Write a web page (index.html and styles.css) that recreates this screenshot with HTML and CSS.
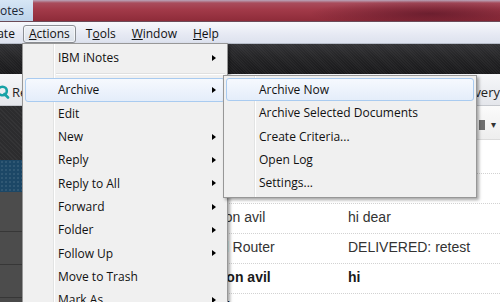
FILE: index.html
```html
<!DOCTYPE html>
<html lang="en">
<head>
    <meta charset="UTF-8">
    <title>IBM Notes - Actions</title>
    <link rel="stylesheet" href="styles.css">
</head>
<body>
    <div class="window">
        <div class="titlebar">
            <div class="title-text">Notes</div>
            <div class="title-glass"></div>
        </div>

        <div class="menubar">
            <span class="mb-item mb-cut">Create</span>
            <span class="mb-item open"><u>A</u>ctions</span>
            <span class="mb-item">T<u>o</u>ols</span>
            <span class="mb-item"><u>W</u>indow</span>
            <span class="mb-item"><u>H</u>elp</span>
        </div>

        <div class="toolbar-dark"></div>

        <div class="toolbar-light">
            <span class="tb-left">
                <svg class="q-icon" width="11" height="14" viewBox="0 0 11 14">
                    <circle cx="3.5" cy="6" r="4.3" fill="none" stroke="#16a2a6" stroke-width="2.6"/>
                    <path d="M5.5 9 L9 12.5" stroke="#16a2a6" stroke-width="2.6" stroke-linecap="round"/>
                </svg>
                Re
            </span>
            <span class="tb-right">very</span>
        </div>

        <div class="workspace">
            <div class="navpane">
                <div class="nav-dark"></div>
                <div class="nav-sel"></div>
                <div class="nav-row tall"></div>
                <div class="nav-row"></div>
                <div class="nav-row"></div>
            </div>
            <div class="viewpane">
                <div class="view-head">
                    <span class="view-box"></span>
                    <span class="view-drop">&#9662;</span>
                </div>
                <div class="rows">
                    <div class="row"></div>
                    <div class="row"></div>
                    <div class="row"><span class="who">Jason avil</span><span class="subj">hi dear</span></div>
                    <div class="row"><span class="who">Mail Router</span><span class="subj">DELIVERED: retest</span></div>
                    <div class="row unread"><span class="who">Jason avil</span><span class="subj">hi</span></div>
                    <div class="row unread"><span class="who">Mail Router</span><span class="subj">DELIVERED</span></div>
                </div>
            </div>
        </div>

        <div class="menu menu-main">
            <div class="mi">IBM iNotes<span class="arrow"></span></div>
            <div class="sep"></div>
            <div class="mi hot">Archive<span class="arrow"></span></div>
            <div class="mi">Edit</div>
            <div class="mi">New<span class="arrow"></span></div>
            <div class="mi">Reply<span class="arrow"></span></div>
            <div class="mi">Reply to All<span class="arrow"></span></div>
            <div class="mi">Forward<span class="arrow"></span></div>
            <div class="mi">Folder<span class="arrow"></span></div>
            <div class="mi">Follow Up<span class="arrow"></span></div>
            <div class="mi">Move to Trash</div>
            <div class="mi">Mark As<span class="arrow"></span></div>
        </div>

        <div class="menu menu-sub">
            <div class="mi hot">Archive Now</div>
            <div class="mi">Archive Selected Documents</div>
            <div class="mi">Create Criteria...</div>
            <div class="mi">Open Log</div>
            <div class="mi">Settings...</div>
        </div>
    </div>
</body>
</html>
```

FILE: styles.css
```css
body {
    margin: 0;
    font-family: 'Open Sans', 'Noto Sans', sans-serif;
    background-color: #fff;
}
.window {
    position: relative;
    width: 500px;
    height: 302px;
    overflow: hidden;
    background-color: #fff;
}

/* title bar */
.titlebar {
    display: flex;
    height: 21px;
    border-bottom: 1px solid #6b4a58;
}
.title-text {
    width: 33px;
    overflow: hidden;
    white-space: nowrap;
    text-indent: -9px;
    font-size: 12px;
    line-height: 21px;
    color: #1b2533;
    background: linear-gradient(#d6e6f5, #bcd3ea);
}
.title-glass {
    flex: 1;
    background:
        radial-gradient(ellipse 120px 14px at 85% 65%, rgba(70, 12, 30, 0.55), transparent),
        linear-gradient(#b9a6ba 0, #a94c5c 3px, #a23a49 45%, #8e2b39 100%);
}

/* menu bar */
.menubar {
    display: flex;
    align-items: flex-start;
    height: 18px;
    padding-top: 3px;
    border-bottom: 1px solid #b7bdc9;
    background: linear-gradient(#f7f8fc, #e6e9f3 60%, #dde2ee);
    font-size: 12px;
    color: #111;
    overflow: hidden;
}
.mb-item {
    padding: 0 8px;
    line-height: 18px;
    white-space: nowrap;
}
.mb-cut {
    margin-left: -22px;
    padding-left: 0;
}
.mb-item.open {
    padding: 0 5px;
    line-height: 16px;
    margin-right: 2px;
    border: 1px solid #8c8f95;
    border-radius: 3px;
    background: linear-gradient(#eef1f6, #dbe1ea);
    box-shadow: inset 0 0 0 1px rgba(255, 255, 255, 0.6);
}

/* toolbars */
.toolbar-dark {
    height: 30px;
    background:
        repeating-linear-gradient(45deg, rgba(255, 255, 255, 0.035) 0 1px, transparent 1px 2px),
        linear-gradient(#333336, #242426 45%, #19191b);
}
.toolbar-light {
    display: flex;
    justify-content: space-between;
    align-items: center;
    height: 27px;
    padding-top: 4px;
    border-bottom: 1px solid #c4c7cd;
    background: linear-gradient(#f6f7f9, #e4e6eb);
    font-size: 13px;
    color: #222;
}
.tb-left {
    display: flex;
    align-items: center;
    gap: 2px;
}
.q-icon {
    margin-left: -1px;
}
.tb-right {
    white-space: nowrap;
}

/* workspace behind the menus */
.workspace {
    display: grid;
    grid-template-columns: 190px 1fr;
}
.navpane {
    display: flex;
    flex-direction: column;
    background-color: #4a4a4a;
    height: 200px;
}
.nav-dark {
    height: 54px;
    background:
        repeating-linear-gradient(45deg, rgba(255, 255, 255, 0.04) 0 1px, transparent 1px 3px),
        #2c2c2e;
}
.nav-sel {
    height: 32px;
    background:
        radial-gradient(circle, rgba(255, 255, 255, 0.12) 0.6px, transparent 1px) 0 0 / 4px 4px,
        #1c4766;
}
.nav-row {
    height: 32px;
    border-bottom: 1px solid #373737;
    background-color: #4c4c4c;
}
.nav-row.tall {
    height: 39px;
}
.viewpane {
    font-family: 'Liberation Sans', Arial, sans-serif;
    font-size: 14px;
    color: #333;
}
.view-head {
    display: flex;
    justify-content: flex-end;
    align-items: center;
    gap: 6px;
    box-sizing: border-box;
    height: 34px;
    padding: 4px 4px 0 0;
    border-bottom: 1px solid #dcdcdc;
    background: linear-gradient(#fbfbfb, #eeeeee);
}
.view-box {
    width: 6px;
    height: 10px;
    background-color: #6e6e6e;
}
.view-drop {
    font-size: 10px;
    color: #333;
}
.rows {
    padding-top: 4px;
}
.row {
    display: grid;
    grid-template-columns: 158px 1fr;
    align-items: center;
    height: 26px;
    padding-bottom: 3px;
    border-bottom: 1px dotted #d2d2d2;
}
.row .who {
    padding-left: 13px;
    white-space: nowrap;
}
.row.unread {
    font-weight: bold;
    color: #1a1a1a;
}

/* drop-down menus */
.menu {
    position: absolute;
    box-sizing: border-box;
    padding: 2px;
    border: 1px solid #979797;
    background-color: #f0f0f0;
    background-image: linear-gradient(90deg, transparent 30px, #e2e3e3 30px 31px, #fff 31px 32px, transparent 32px);
    box-shadow: 2px 2px 3px rgba(0, 0, 0, 0.35);
    font-size: 12px;
    color: #111;
}
.menu-main {
    left: 22px;
    top: 43px;
    width: 206px;
    height: 280px;
}
.menu-sub {
    left: 223px;
    top: 75px;
    width: 254px;
}
.mi {
    display: flex;
    align-items: center;
    justify-content: space-between;
    box-sizing: border-box;
    height: 23.33px;
    padding: 0 8px 0 32px;
    border: 1px solid transparent;
    border-radius: 3px;
    white-space: nowrap;
}
.mi.hot {
    border-color: #a9cbf0;
    background: linear-gradient(#f6f9fe, #e4edfa);
}
.arrow {
    width: 0;
    height: 0;
    border-left: 4px solid #000;
    border-top: 3.5px solid transparent;
    border-bottom: 3.5px solid transparent;
}
.sep {
    height: 9px;
    background:
        linear-gradient(#e0e0e0, #e0e0e0) 31px 4px / calc(100% - 31px) 1px no-repeat,
        linear-gradient(#fff, #fff) 31px 5px / calc(100% - 31px) 1px no-repeat;
}
```
